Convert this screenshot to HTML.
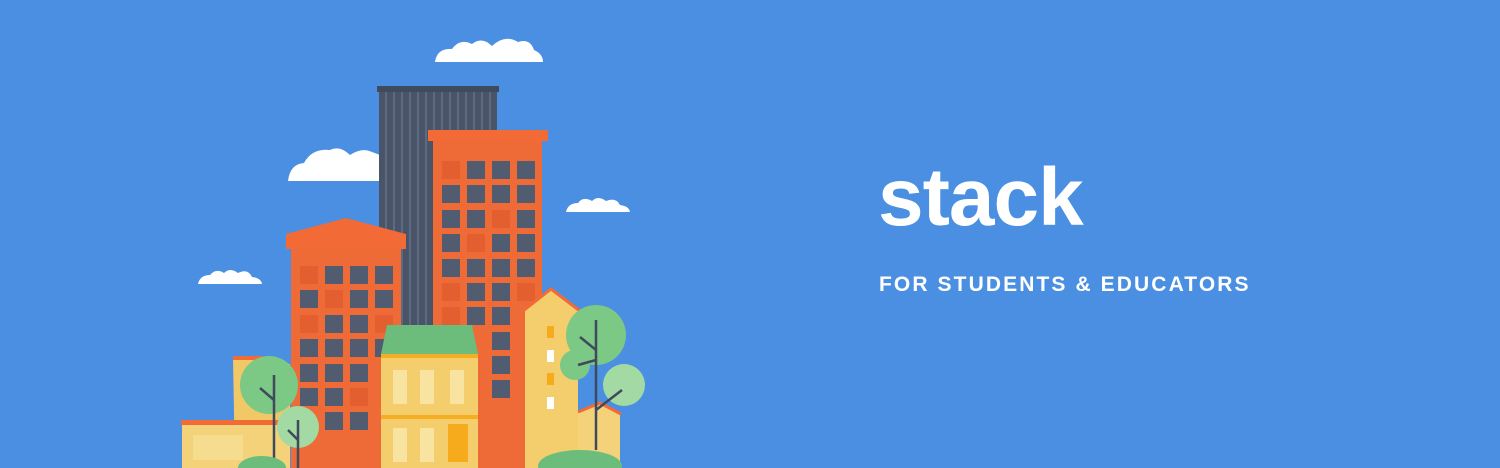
<!DOCTYPE html>
<html><head><meta charset="utf-8"><style>
html,body{margin:0;padding:0}
body{width:1500px;height:468px;background:#4a8fe2;position:relative;overflow:hidden;font-family:"Liberation Sans",sans-serif}
.t1{position:absolute;left:878px;top:148px;color:#fff;font-weight:bold;font-size:82px;letter-spacing:-1px;line-height:100px}
.t2{position:absolute;left:879px;top:272px;color:#fff;font-weight:bold;font-size:21px;letter-spacing:2.1px;line-height:26px}
</style></head><body>
<svg width="1500" height="468" style="position:absolute;left:0;top:0">
<g fill="#fff">
<path d="M435 62 Q437 48 452 49 Q460 38 472 44 Q482 36 492 46 Q505 34 518 42 Q530 38 534 50 Q543 54 543 62 Z"/>
<path d="M288 181 Q290 164 304 163 Q312 148 330 150 Q340 145 350 155 Q362 147 372 152 L380 155 L380 181 Z"/>
<path d="M566 212 Q568 203 578 203 Q583 196 592 201 Q598 195 606 201 Q616 197 620 205 Q629 206 630 212 Z"/>
<path d="M198 284 Q200 275 210 275 Q216 268 224 273 Q230 267 238 273 Q248 268 252 277 Q261 278 262 284 Z"/>
</g>
<rect x="377" y="86" width="122" height="6" fill="#3f4a5c"/>
<rect x="379" y="92" width="118" height="300" fill="#4a5468"/>
<g stroke="#65708a" stroke-width="1.5">
<path d="M386 92V392M394 92V392M402 92V392M410 92V392M418 92V392M426 92V392M434 92V392M442 92V392M450 92V392M458 92V392M466 92V392M474 92V392M482 92V392M490 92V392"/>
</g>
<rect x="428" y="130" width="120" height="11" fill="#f26a35"/>
<rect x="433" y="141" width="109" height="327" fill="#ee6a36"/>
<g fill="#525c70">
<rect x="467" y="161" width="18" height="18"/><rect x="492" y="161" width="18" height="18"/><rect x="517" y="161" width="18" height="18"/>
<rect x="442" y="185" width="18" height="18"/><rect x="467" y="185" width="18" height="18"/><rect x="492" y="185" width="18" height="18"/><rect x="517" y="185" width="18" height="18"/>
<rect x="442" y="210" width="18" height="18"/><rect x="467" y="210" width="18" height="18"/><rect x="517" y="210" width="18" height="18"/>
<rect x="442" y="234" width="18" height="18"/><rect x="492" y="234" width="18" height="18"/><rect x="517" y="234" width="18" height="18"/>
<rect x="442" y="259" width="18" height="18"/><rect x="467" y="259" width="18" height="18"/><rect x="492" y="259" width="18" height="18"/><rect x="517" y="259" width="18" height="18"/>
<rect x="467" y="283" width="18" height="18"/><rect x="492" y="283" width="18" height="18"/>
<rect x="467" y="307" width="18" height="18"/><rect x="492" y="307" width="18" height="18"/>
<rect x="492" y="332" width="18" height="18"/>
<rect x="492" y="356" width="18" height="18"/>
<rect x="492" y="380" width="18" height="18"/>
</g>
<g fill="#e35f30">
<rect x="442" y="161" width="18" height="18"/><rect x="492" y="210" width="18" height="18"/><rect x="467" y="234" width="18" height="18"/><rect x="442" y="283" width="18" height="18"/><rect x="517" y="283" width="18" height="18"/><rect x="442" y="307" width="18" height="18"/>
</g>
<path d="M286 234 L346 218 L406 234 Z" fill="#f26a35"/>
<rect x="286" y="234" width="120" height="15" fill="#f26a35"/>
<rect x="291" y="249" width="110" height="219" fill="#ee6a36"/>
<g fill="#525c70">
<rect x="325" y="266" width="18" height="18"/><rect x="350" y="266" width="18" height="18"/><rect x="375" y="266" width="18" height="18"/>
<rect x="300" y="290" width="18" height="18"/><rect x="350" y="290" width="18" height="18"/><rect x="375" y="290" width="18" height="18"/>
<rect x="325" y="315" width="18" height="18"/><rect x="350" y="315" width="18" height="18"/>
<rect x="300" y="339" width="18" height="18"/><rect x="325" y="339" width="18" height="18"/><rect x="350" y="339" width="18" height="18"/><rect x="375" y="339" width="18" height="18"/>
<rect x="300" y="364" width="18" height="18"/><rect x="325" y="364" width="18" height="18"/><rect x="350" y="364" width="18" height="18"/>
<rect x="300" y="388" width="18" height="18"/><rect x="325" y="388" width="18" height="18"/>
<rect x="325" y="412" width="18" height="18"/><rect x="350" y="412" width="18" height="18"/>
</g>
<g fill="#e35f30"><rect x="300" y="266" width="18" height="18"/><rect x="325" y="290" width="18" height="18"/><rect x="300" y="315" width="18" height="18"/><rect x="375" y="315" width="18" height="18"/><rect x="350" y="388" width="18" height="18"/></g>
<path d="M233 358 L290 364 V468 H235 Z" fill="#f0c866"/>
<rect x="233" y="356" width="30" height="4" fill="#f26a35"/>
<rect x="181" y="420" width="112" height="5" fill="#f26a35"/>
<rect x="182" y="425" width="108" height="43" fill="#f4d27a"/>
<rect x="193" y="435" width="50" height="25" fill="#f6dc8e"/>
<path d="M387 325 H472 L478 354 H381 Z" fill="#6cbd7c"/>
<rect x="381" y="354" width="97" height="114" fill="#f4cd6c"/>
<rect x="381" y="354" width="97" height="4" fill="#f5ad22"/>
<rect x="381" y="415" width="97" height="4" fill="#f5ad22"/>
<g fill="#f8e3a0">
<rect x="393" y="370" width="14" height="34"/><rect x="420" y="370" width="14" height="34"/><rect x="450" y="370" width="14" height="34"/>
<rect x="393" y="428" width="14" height="34"/><rect x="420" y="428" width="14" height="34"/>
</g>
<rect x="448" y="424" width="20" height="38" fill="#f5ab1c"/>
<path d="M525 311 L551 290 L578 311 V468 H525 Z" fill="#f4cd6c"/>
<path d="M523 311 L551 289 L580 311" fill="none" stroke="#f26a35" stroke-width="3"/>
<rect x="547" y="326" width="7" height="12" fill="#f5ab1c"/><rect x="547" y="350" width="7" height="12" fill="#fff"/><rect x="547" y="373" width="7" height="12" fill="#f5ab1c"/><rect x="547" y="397" width="7" height="12" fill="#fff"/>
<path d="M578 412 L600 404 L620 414 V468 H578 Z" fill="#f4d27a"/>
<path d="M578 412 L600 403 L621 414" fill="none" stroke="#f26a35" stroke-width="3"/>
<g fill="#7cc885">
<circle cx="596" cy="335" r="30"/><circle cx="575" cy="365" r="15"/><circle cx="269" cy="385" r="29"/>
</g>
<g fill="#a3d9a2"><circle cx="624" cy="385" r="21"/><circle cx="298" cy="427" r="21"/></g>
<g stroke="#3f4a5c" stroke-width="2.5" fill="none">
<path d="M596 320 V450 M596 350 L580 337 M596 360 L578 365 M596 410 L622 390"/>
<path d="M274 375 V468 M274 400 L260 388"/>
<path d="M298 420 V468 M298 440 L288 430"/>
</g>
<g fill="#6cbd7c"><ellipse cx="580" cy="466" rx="42" ry="16"/><ellipse cx="262" cy="468" rx="24" ry="12"/></g>
</svg>
<div class="t1">stack</div>
<div class="t2">FOR STUDENTS &amp; EDUCATORS</div>
</body></html>
